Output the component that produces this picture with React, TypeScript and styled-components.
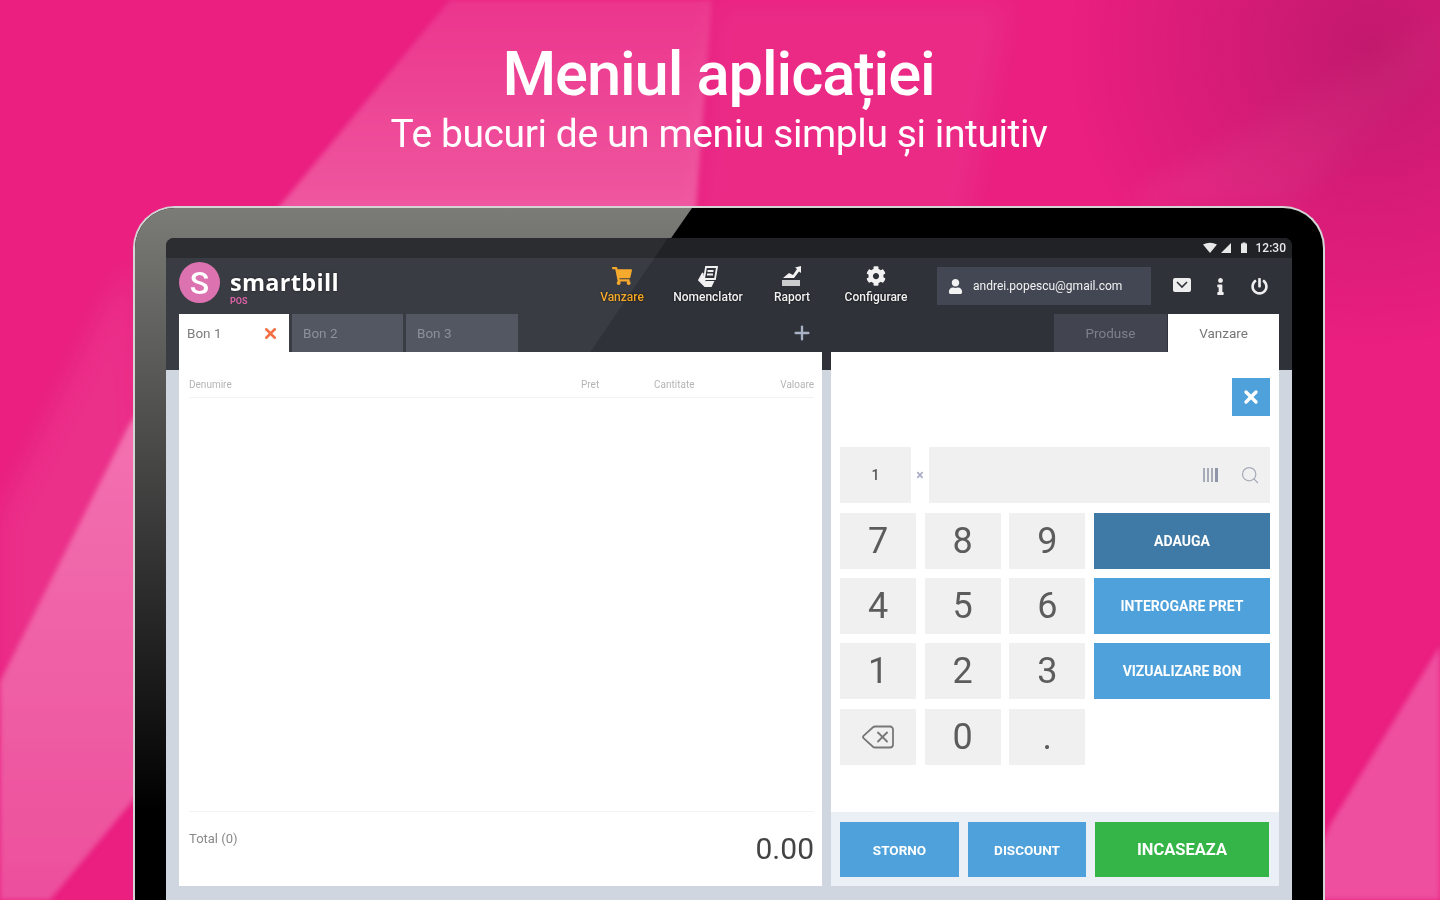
import React from "react";
import styled, { createGlobalStyle } from "styled-components";
import { FaCog, FaInfo, FaPowerOff, FaShoppingCart, FaUser } from "react-icons/fa";
import { Delete, Plus, Search, X } from "lucide-react";

const GlobalStyle = createGlobalStyle`
  html, body {
    margin: 0;
    height: 100%;
    overflow: hidden;
    font-family: Roboto, "Liberation Sans", sans-serif;
  }
`;

const Page = styled.div`
  position: relative;
  width: 1440px;
  height: 900px;
  overflow: hidden;
  background: #ea1f80;
`;

const BackdropArt = styled.svg`
  position: absolute;
  inset: 0;
`;

const Foreground = styled.div`
  position: relative;
  display: flex;
  flex-direction: column;
  align-items: center;
  height: 100%;
`;

const Title = styled.h1`
  margin: 39px 3px 0 0;
  font-size: 61.5px;
  line-height: 70px;
  font-weight: 500;
  letter-spacing: -1.1px;
  color: #fff;
  filter: blur(0.6px);
`;

const Subtitle = styled.p`
  margin: 0 2px 0 0;
  font-size: 39px;
  line-height: 50px;
  font-weight: 400;
  letter-spacing: -0.4px;
  color: #fff;
  filter: blur(0.6px);
`;

const Device = styled.div`
  position: relative;
  flex: none;
  box-sizing: border-box;
  margin: 47px 0 0 18px;
  width: 1192px;
  height: 720px;
  padding: 30px 31px 0;
  background: #000;
  border: 2px solid #d4d4d4;
  border-bottom: 0;
  border-radius: 42px 42px 0 0;
  overflow: hidden;

  &::before {
    content: "";
    position: absolute;
    inset: 0;
    background: linear-gradient(180deg, #7b7c78 0, #6b6b68 10%, #3a3a3a 44%, #000 84%);
    clip-path: polygon(0 0, 557px 0, 0 800px);
  }
`;

const Screen = styled.div`
  position: relative;
  height: 100%;
  border-radius: 8px 8px 0 0;
  overflow: hidden;
  background: linear-gradient(#30323a 0 132px, #cfd6e0 132px);
  filter: blur(0.6px);
`;

const Glare = styled.div`
  position: absolute;
  inset: 0 0 auto 0;
  height: 132px;
  background: rgba(255, 255, 255, 0.05);
  clip-path: polygon(0 0, 502px 0, 412px 132px, 0 132px);
  pointer-events: none;
`;

const StatusBar = styled.div`
  display: flex;
  justify-content: flex-end;
  align-items: center;
  gap: 5px;
  height: 20px;
  padding-right: 6px;
  background: #202226;
  color: #e8e8e8;
  font-size: 12px;
  font-weight: 500;
`;

const AppBar = styled.div`
  display: flex;
  align-items: center;
  height: 56px;
  padding: 0 13px;
`;

const Logo = styled.div`
  display: flex;
  align-self: flex-start;
  gap: 10px;
  width: 399px;
  padding-top: 4px;
`;

const LogoMark = styled.div`
  width: 41px;
  height: 41px;
  border-radius: 50%;
  background: #dc6bac;
  color: #fff;
  display: flex;
  align-items: center;
  justify-content: center;
  font-size: 32px;
  font-weight: 500;
`;

const LogoWords = styled.div`
  margin-top: 6px;
`;

const LogoText = styled.div`
  color: #fff;
  font-family: "Open Sans", sans-serif;
  font-size: 23.5px;
  line-height: 28px;
  font-weight: 700;
  letter-spacing: 0.3px;
  text-shadow: 0 0 2px #000;
`;

const LogoSub = styled.div`
  color: #d6589f;
  font-size: 9px;
  line-height: 10px;
  font-weight: 700;
`;

const NavItem = styled.div<{ $width: number; $active?: boolean }>`
  width: ${(p) => p.$width}px;
  margin-bottom: 4px;
  display: flex;
  flex-direction: column;
  align-items: center;
  gap: 3px;
  font-size: 12px;
  font-weight: 500;
  color: ${(p) => (p.$active ? "#f5a623" : "#f2f2f2")};
  text-shadow: 0 0 2px #000;
`;

const NavIcon = styled.div`
  height: 22px;
  display: flex;
  align-items: center;
  font-size: 20px;
`;

const UserBox = styled.div`
  display: flex;
  align-items: center;
  gap: 10px;
  box-sizing: border-box;
  width: 214px;
  height: 38px;
  margin-left: 19px;
  padding-left: 11px;
  background: #434754;
  color: #f2f2f2;
  font-size: 12px;
`;

const BarIcon = styled.div`
  width: 39px;
  display: flex;
  justify-content: center;
  color: #eee;
  font-size: 17px;
`;

const BarIcons = styled.div`
  display: flex;
  margin-left: 11px;
`;

const TabRow = styled.div`
  display: flex;
  height: 38px;
  padding: 0 13px;
  align-items: flex-end;
`;

const Tab = styled.div<{ $active?: boolean; $width: number }>`
  box-sizing: border-box;
  display: flex;
  align-items: center;
  justify-content: ${(p) => (p.$active ? "space-between" : "flex-start")};
  width: ${(p) => p.$width}px;
  height: 38px;
  padding: 0 10px 0 ${(p) => (p.$active ? 8 : 11)}px;
  margin-right: 3px;
  background: ${(p) => (p.$active ? "#fff" : "#4a4e5a")};
  color: ${(p) => (p.$active ? "#777" : "#868b96")};
  font-size: 13.5px;
`;

const AddTab = styled.div`
  display: flex;
  justify-content: center;
  width: 80px;
  margin-left: 241px;
  padding-bottom: 8px;
  color: #a9b3c6;
`;

const SideTab = styled.div<{ $active?: boolean; $width: number }>`
  display: flex;
  align-items: center;
  justify-content: center;
  width: ${(p) => p.$width}px;
  height: 38px;
  background: ${(p) => (p.$active ? "#fff" : "#42454f")};
  color: ${(p) => (p.$active ? "#777" : "#7d818c")};
  font-size: 13.5px;
`;

const SideTabs = styled.div`
  display: flex;
  gap: 1px;
  margin-left: auto;
`;

const Content = styled.div`
  display: flex;
  gap: 9px;
  padding: 0 13px;
  height: 534px;
`;

const ReceiptPanel = styled.div`
  width: 643px;
  background: #fff;
  display: flex;
  flex-direction: column;
  padding: 0 8px 0 10px;
  box-sizing: border-box;
`;

const TableHead = styled.div`
  display: grid;
  grid-template-columns: 392px 73px 1fr auto;
  align-items: center;
  height: 46px;
  box-sizing: border-box;
  padding-top: 20px;
  border-bottom: 1px solid #f1f3f5;
  font-size: 10px;
  color: #b5b5b5;
`;

const TableBody = styled.div`
  flex: 1;
  border-bottom: 1px solid #f1f3f5;
`;

const Totals = styled.div`
  display: flex;
  justify-content: space-between;
  height: 74px;
`;

const TotalLabel = styled.div`
  margin-top: 19px;
  font-size: 13px;
  color: #8a8a8a;
`;

const TotalValue = styled.div`
  margin-top: 19px;
  font-size: 30px;
  line-height: 36px;
  color: #444;
`;

const SalePanel = styled.div`
  width: 448px;
  display: flex;
  flex-direction: column;
  background: #fff;
`;

const SaleBody = styled.div`
  flex: 1;
  padding: 26px 9px 0;
`;

const CloseRow = styled.div`
  display: flex;
  justify-content: flex-end;
  height: 69px;
`;

const CloseButton = styled.div`
  width: 38px;
  height: 38px;
  display: flex;
  align-items: center;
  justify-content: center;
  background: #4ea1da;
  color: #fff;
`;

const SearchRow = styled.div`
  display: flex;
  align-items: center;
  height: 56px;
  margin-bottom: 10px;
`;

const QtyBox = styled.div`
  width: 71px;
  height: 56px;
  background: #f0f0f0;
  color: #555;
  font-size: 14px;
  font-weight: 500;
  display: flex;
  align-items: center;
  justify-content: center;
`;

const Multiply = styled.div`
  width: 18px;
  text-align: center;
  color: #a9adc8;
  font-size: 14px;
  font-weight: 700;
`;

const SearchBox = styled.div`
  flex: 1;
  height: 56px;
  background: #f0f0f0;
  display: flex;
  align-items: center;
  justify-content: flex-end;
  gap: 21px;
  padding-right: 10px;
  color: #a6abb8;
`;

const Keypad = styled.div`
  display: grid;
  grid-template-columns: 76px 76px 76px 176px;
  grid-auto-rows: 56px;
  column-gap: 8.67px;
  row-gap: 9.2px;
`;

const Key = styled.div`
  background: #f0f0f0;
  color: #5c5c5c;
  font-size: 36px;
  font-weight: 400;
  display: flex;
  align-items: center;
  justify-content: center;
`;

const ActionButton = styled.div<{ $bg: string; $size?: number }>`
  background: ${(p) => p.$bg};
  color: #fff;
  font-size: ${(p) => p.$size ?? 14}px;
  font-weight: 700;
  display: flex;
  align-items: center;
  justify-content: center;
`;

const SaleFooter = styled.div`
  display: grid;
  grid-template-columns: 119px 118px 174px;
  grid-auto-rows: 55px;
  column-gap: 9px;
  height: 55px;
  padding: 10px 9px 9px;
  background: #eaf0f6;
`;

const Backdrop = () => (
  <BackdropArt width="1440" height="900" viewBox="0 0 1440 900">
    <defs>
      <linearGradient id="band" x1="0" y1="0" x2="0" y2="1">
        <stop offset="0" stopColor="#ffffff" stopOpacity="0.1" />
        <stop offset="0.8" stopColor="#ffffff" stopOpacity="0.25" />
      </linearGradient>
      <linearGradient id="leftBand" x1="0" y1="0" x2="0" y2="1">
        <stop offset="0" stopColor="#f477b3" />
        <stop offset="1" stopColor="#ec4f9c" />
      </linearGradient>
      <radialGradient id="corner" cx="1370" cy="45" r="300" gradientUnits="userSpaceOnUse">
        <stop offset="0" stopColor="#a81560" stopOpacity="0.6" />
        <stop offset="1" stopColor="#a81560" stopOpacity="0" />
      </radialGradient>
      <filter id="soft">
        <feGaussianBlur stdDeviation="2.5" />
      </filter>
      <filter id="softer">
        <feGaussianBlur stdDeviation="14" />
      </filter>
    </defs>
    <g filter="url(#softer)">
      <polygon points="0,520 130,260 150,520 0,720" fill="#ffffff" opacity="0.08" />
      <polygon points="712,0 1010,0 960,260 692,260" fill="#ffffff" opacity="0.05" />
      <polygon points="1120,206 1320,90 1440,20 1440,60 1290,206" fill="#ffffff" opacity="0.06" />
    </g>
    <g filter="url(#soft)">
      <polygon points="450,0 712,0 692,260 235,260" fill="url(#band)" />
      <polygon points="0,682 130,423 200,340 200,720 50,900 0,900" fill="url(#leftBand)" />
      <polygon points="1330,825 1440,646 1440,900 1300,900" fill="#ee4f9e" />
    </g>
    <rect width="1440" height="900" fill="url(#corner)" />
  </BackdropArt>
);

const Barcode = () => (
  <svg width="16" height="16" viewBox="0 0 16 16" fill="currentColor">
    <rect x="0" y="1" width="2" height="14" />
    <rect x="4" y="1" width="2" height="14" />
    <rect x="8" y="1" width="2" height="14" />
    <rect x="12" y="1" width="3" height="14" fill="#8f95a8" />
  </svg>
);

const StatusIcons = () => (
  <svg width="48" height="12" viewBox="0 0 48 12" fill="currentColor">
    <path d="M0 2.5 Q7 -1 14 2.5 L7 11z" />
    <path d="M18 11 L28 1 V11z" />
    <rect x="38" y="1.5" width="6" height="9.5" />
    <rect x="39.5" y="0.5" width="3" height="1.5" />
  </svg>
);

const ChartIcon = () => (
  <svg width="24" height="22" viewBox="0 0 24 22" fill="currentColor">
    <path d="M2 21v-6h18v6z" opacity="0.8" />
    <path d="M3 13 L9 8 L13 10 L17 4 L15 2.5 L21 1 L21 8 L19 6.5 L14 13z" />
  </svg>
);

const ProductsIcon = () => (
  <svg width="22" height="22" viewBox="0 0 22 22" fill="none" stroke="currentColor" strokeWidth="1.8">
    <path d="M9 2h11l-2 12H7z" />
    <path d="M10.5 6h6M10 9.5h6" />
    <path d="M6 8 L2 15 L8 21 H14 L16 17 H9" fill="currentColor" />
  </svg>
);

const InboxIcon = () => (
  <svg width="18" height="14" viewBox="0 0 18 14" fill="currentColor">
    <rect width="18" height="14" rx="2" />
    <path d="M4 4 L9 9 L14 4" fill="none" stroke="#30323a" strokeWidth="1.6" />
  </svg>
);

const keys: React.ReactNode[] = ["7", "8", "9", "4", "5", "6", "1", "2", "3"];
const actions = [
  { label: "ADAUGA", bg: "#3f7aa6" },
  { label: "INTEROGARE PRET", bg: "#4ea1da" },
  { label: "VIZUALIZARE BON", bg: "#4ea1da" },
];

const App = () => {
  return (
    <Page>
      <GlobalStyle />
      <Backdrop />
      <Foreground>
        <Title>Meniul aplicației</Title>
        <Subtitle>Te bucuri de un meniu simplu și intuitiv</Subtitle>
        <Device>
          <Screen>
            <Glare />
            <StatusBar>
              <StatusIcons />
              12:30
            </StatusBar>
            <AppBar>
              <Logo>
                <LogoMark>S</LogoMark>
                <LogoWords>
                  <LogoText>smartbill</LogoText>
                  <LogoSub>POS</LogoSub>
                </LogoWords>
              </Logo>
              <NavItem $width={88} $active>
                <NavIcon>
                  <FaShoppingCart />
                </NavIcon>
                Vanzare
              </NavItem>
              <NavItem $width={84}>
                <NavIcon>
                  <ProductsIcon />
                </NavIcon>
                Nomenclator
              </NavItem>
              <NavItem $width={84}>
                <NavIcon>
                  <ChartIcon />
                </NavIcon>
                Raport
              </NavItem>
              <NavItem $width={84}>
                <NavIcon>
                  <FaCog />
                </NavIcon>
                Configurare
              </NavItem>
              <UserBox>
                <FaUser size={15} />
                andrei.popescu@gmail.com
              </UserBox>
              <BarIcons>
                <BarIcon>
                  <InboxIcon />
                </BarIcon>
                <BarIcon>
                  <FaInfo />
                </BarIcon>
                <BarIcon>
                  <FaPowerOff />
                </BarIcon>
              </BarIcons>
            </AppBar>
            <TabRow>
              <Tab $active $width={110}>
                Bon 1
                <X size={17} strokeWidth={3.5} color="#f2693a" />
              </Tab>
              <Tab $width={111}>Bon 2</Tab>
              <Tab $width={112}>Bon 3</Tab>
              <AddTab>
                <Plus size={22} strokeWidth={2.5} />
              </AddTab>
              <SideTabs>
                <SideTab $width={113}>Produse</SideTab>
                <SideTab $active $width={111}>
                  Vanzare
                </SideTab>
              </SideTabs>
            </TabRow>
            <Content>
              <ReceiptPanel>
                <TableHead>
                  <span>Denumire</span>
                  <span>Pret</span>
                  <span>Cantitate</span>
                  <span>Valoare</span>
                </TableHead>
                <TableBody />
                <Totals>
                  <TotalLabel>Total (0)</TotalLabel>
                  <TotalValue>0.00</TotalValue>
                </Totals>
              </ReceiptPanel>
              <SalePanel>
                <SaleBody>
                  <CloseRow>
                    <CloseButton>
                      <X size={20} strokeWidth={4} />
                    </CloseButton>
                  </CloseRow>
                  <SearchRow>
                    <QtyBox>1</QtyBox>
                    <Multiply>×</Multiply>
                    <SearchBox>
                      <Barcode />
                      <Search size={20} strokeWidth={1.5} />
                    </SearchBox>
                  </SearchRow>
                  <Keypad>
                    {keys.slice(0, 3).map((k, i) => (
                      <Key key={i}>{k}</Key>
                    ))}
                    <ActionButton $bg={actions[0].bg}>{actions[0].label}</ActionButton>
                    {keys.slice(3, 6).map((k, i) => (
                      <Key key={i}>{k}</Key>
                    ))}
                    <ActionButton $bg={actions[1].bg}>{actions[1].label}</ActionButton>
                    {keys.slice(6, 9).map((k, i) => (
                      <Key key={i}>{k}</Key>
                    ))}
                    <ActionButton $bg={actions[2].bg}>{actions[2].label}</ActionButton>
                    <Key>
                      <Delete size={36} strokeWidth={1.2} color="#777" />
                    </Key>
                    <Key>0</Key>
                    <Key>.</Key>
                  </Keypad>
                </SaleBody>
                <SaleFooter>
                  <ActionButton $bg="#4ea1da" $size={13.5}>
                    STORNO
                  </ActionButton>
                  <ActionButton $bg="#4ea1da" $size={13.5}>
                    DISCOUNT
                  </ActionButton>
                  <ActionButton $bg="#35b548" $size={16.5}>
                    INCASEAZA
                  </ActionButton>
                </SaleFooter>
              </SalePanel>
            </Content>
          </Screen>
        </Device>
      </Foreground>
    </Page>
  );
};

export default App;
